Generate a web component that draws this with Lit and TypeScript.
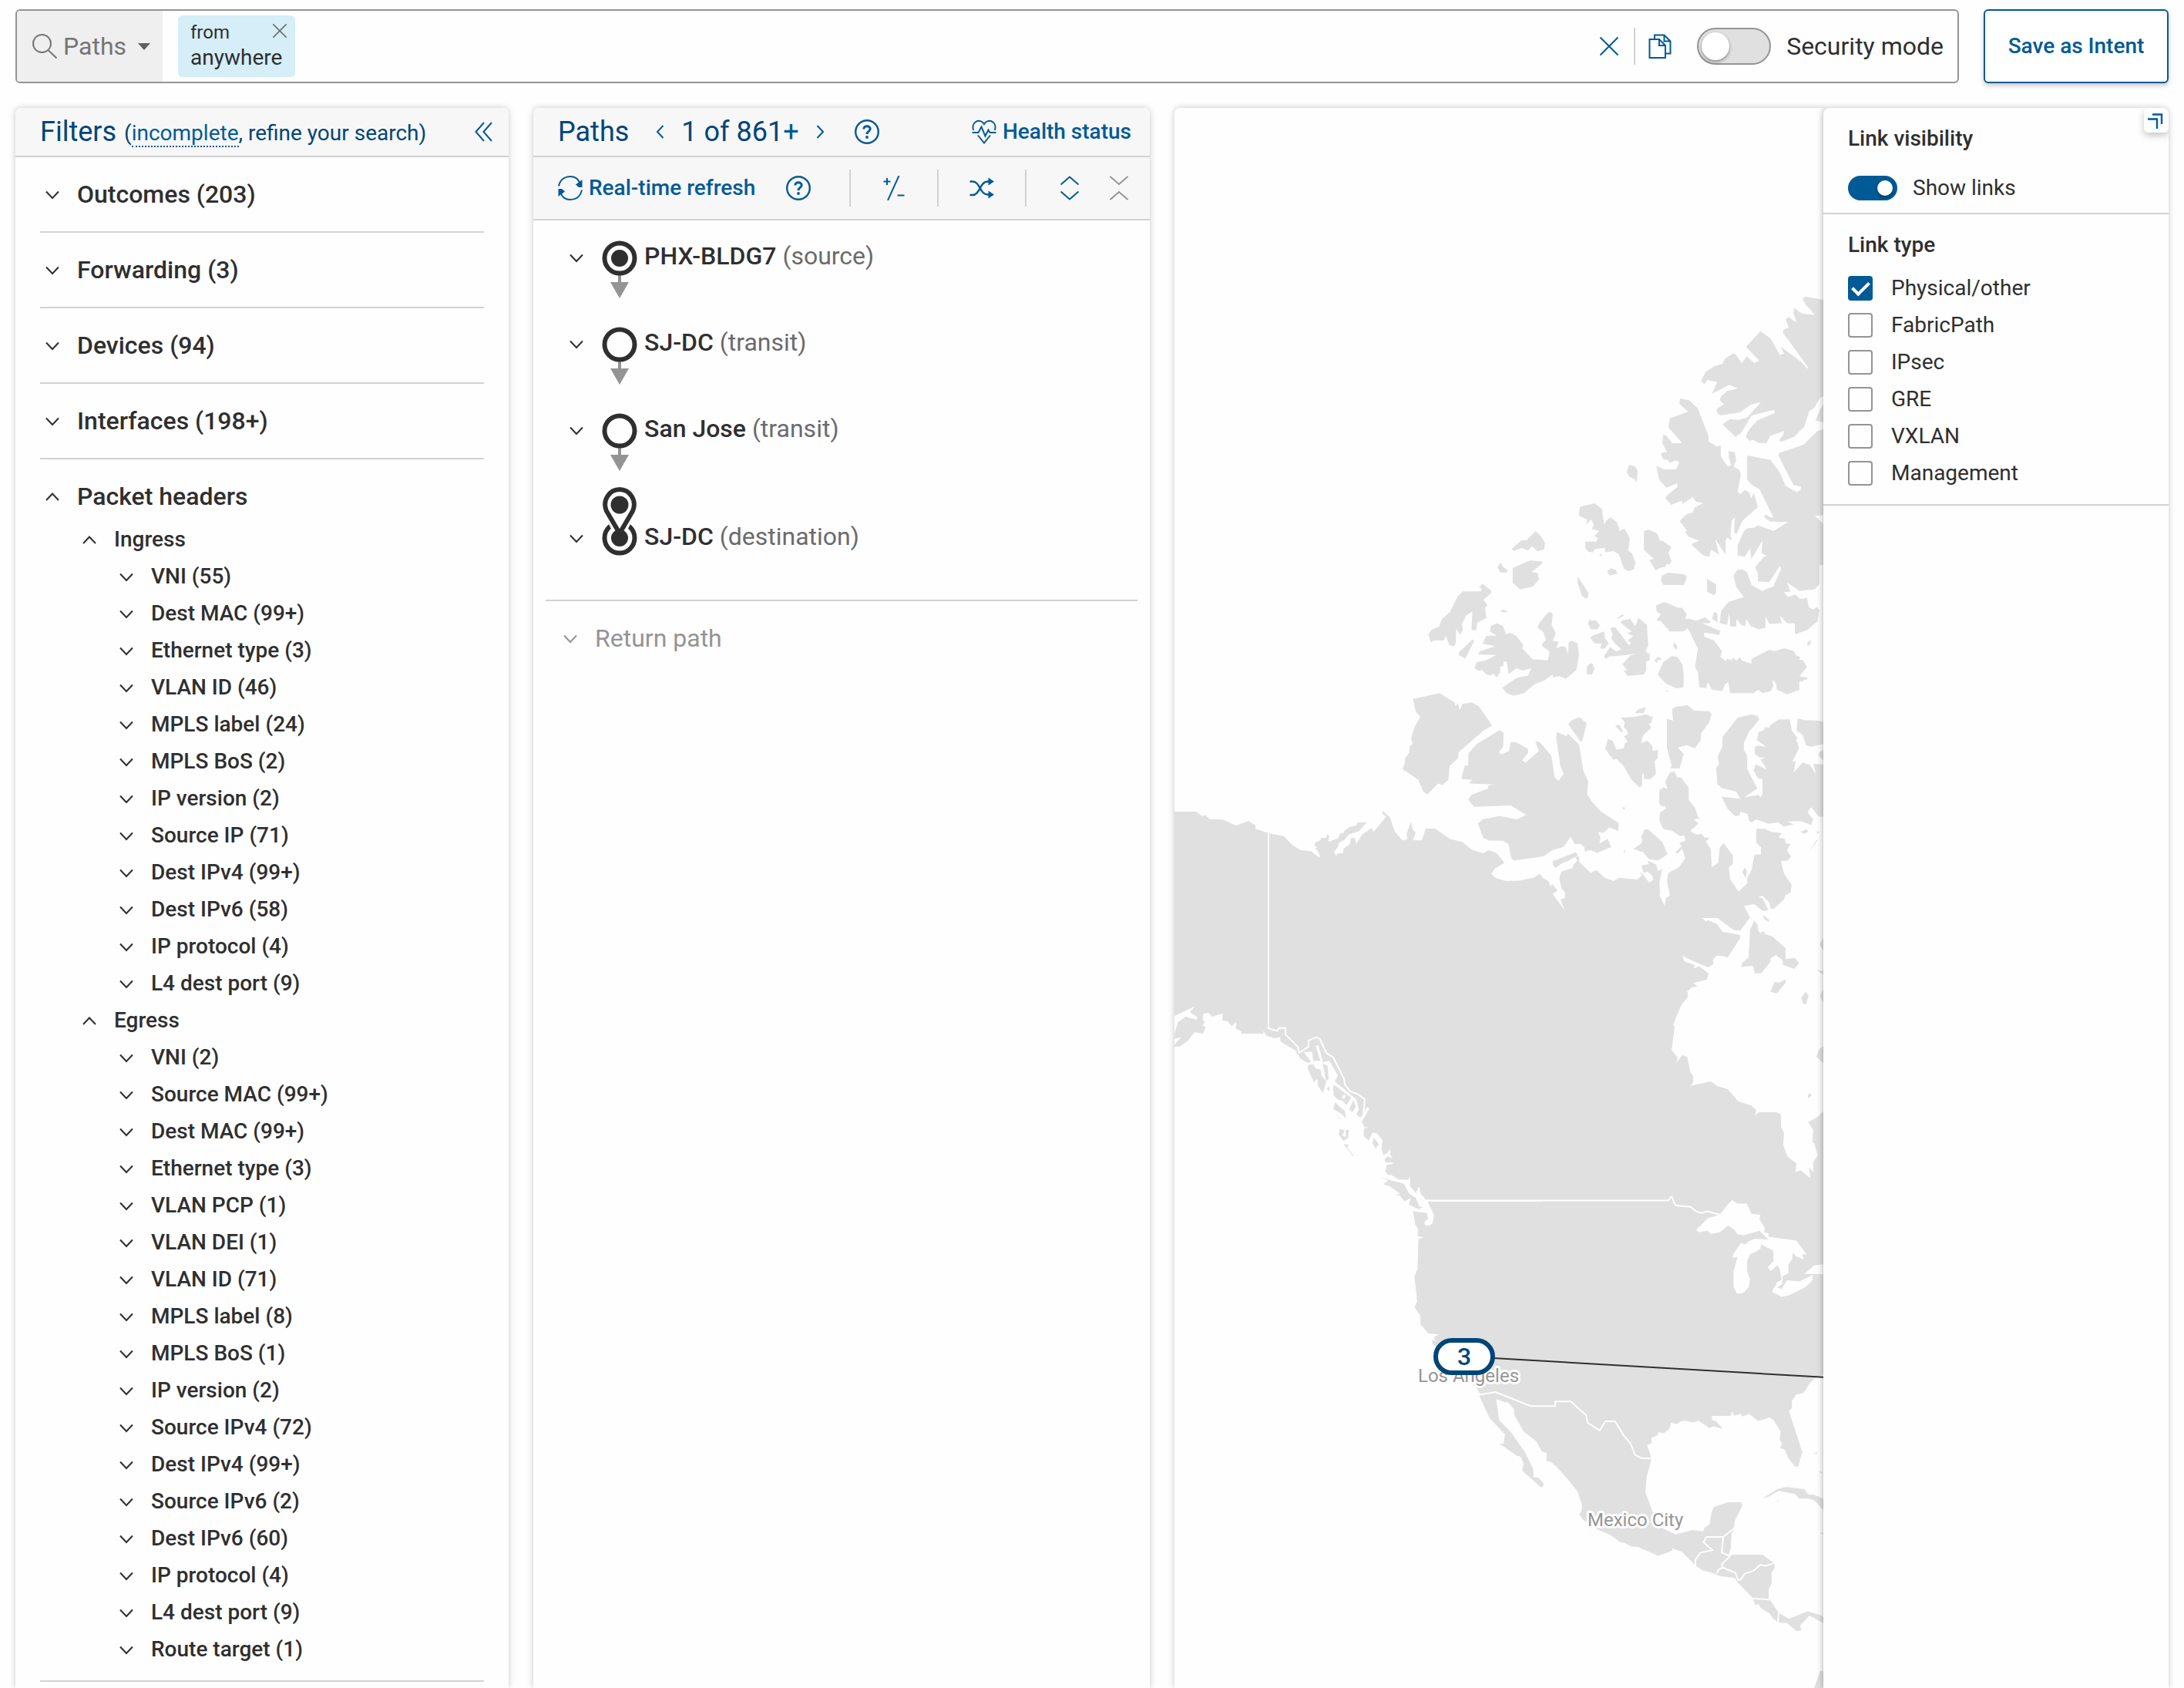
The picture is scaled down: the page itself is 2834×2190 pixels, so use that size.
import { LitElement, html, svg, css, type TemplateResult } from "lit";
import { customElement, property, state } from "lit/decorators.js";

type Glyph = TemplateResult;

const line = (d: string, w = 2): Glyph =>
  svg`<path d=${d} fill="none" stroke="currentColor" stroke-width=${w} />`;

const GLYPHS: Record<string, Glyph> = {
  search: svg`<circle cx="12.5" cy="12.5" r="11.5" fill="none" stroke="currentColor" stroke-width="2" />${line("M21 21.5 31.5 31.5")}`,
  close: line("M4.5 4.5 27.5 27.5M27.5 4.5 4.5 27.5"),
  copy: svg`${line("M9 7V1.5h12.5L29.5 9.5V25.5H23M21.5 1.5V9.5H29.5")}${line("M2.5 7H15L23 15V31H2.5ZM15 7V15H23")}`,
  collapse: line("M16 4 5.500 16 16 28M26 4 15.500 16 26 28"),
  prev: line("M20.500 8 13 16 20.500 24"),
  next: line("M11.500 8 19 16 11.500 24"),
  help: svg`<circle cx="16" cy="16" r="14.800" fill="none" stroke="currentColor" stroke-width="2.400" />${line("M11.800 12.500C11.800 7.500 20.200 7.500 20.200 12.300 20.200 15.500 16 15.400 16 19", 3)}<circle cx="16" cy="23" r="1.900" fill="currentColor" />`,
  health: svg`${line("M2.200 14C-1.500 3 11-2.500 16 6 21-2.500 33.500 3 29.800 14M8 20.500 16 30.500 24 20.500")}${line("M.5 17H8.500L12.500 9.500 17.500 21.500 21.500 13.500 23.500 17H31.500")}`,
  refresh: svg`${line("M1 13.500C3 4 10 1 16 1 22 1 26.500 4.500 28.500 9.500M31 18.500C29 28 22 31 16 31 10 31 5.500 27.500 3.500 22.500")}<path fill="currentColor" d="M31.500 5V15H27L23 11.500ZM.5 27V17H5L9 20.500Z" />`,
  diff: line("M22.500 0 8 32M2.500 7.500H11.500M7 3V12M20.500 25.500H29.500"),
  shuffle: svg`${line("M.5 7.500H4C14 7.500 13 24.500 24 24.500H26M.5 25H4C14 25 13 7.500 24 7.500H26", 2.400)}<path fill="currentColor" d="M24.500 2.500 32 7.500 24.500 12.500ZM24.500 19.500 32 24.500 24.500 29.500Z" />`,
  expand: line("M4.500 11.500 16 1.500 27.500 11.500M4.500 20.500 16 30.500 27.500 20.500"),
  contract: line("M4.500 1 16 11 27.500 1M4.500 31 16 21 27.500 31"),
  corner: line("M11 8.500H23V21M5 14.500H17V27", 2.400),
};

@customElement("ui-icon")
class UiIcon extends LitElement {
  @property() name = "";

  static styles = css`
    :host { display: inline-flex; flex: none; width: 32px; height: 32px; }
    .glyph { display: block; width: 100%; height: 100%; }
  `;

  render() {
    return html`<svg class="glyph" viewBox="0 0 32 32" aria-hidden="true">${GLYPHS[this.name]}</svg>`;
  }
}

@customElement("ui-chevron")
class UiChevron extends LitElement {
  @property({ type: Boolean }) up = false;

  static styles = css`
    :host { display: inline-flex; flex: none; width: 24px; height: 24px; }
    .glyph { display: block; width: 100%; height: 100%; }
  `;

  render() {
    const d = this.up ? "M4 17 12 8.500 20 17" : "M4 8.500 12 17 20 8.500";
    return html`<svg class="glyph" viewBox="0 0 24 24" aria-hidden="true">${line(d)}</svg>`;
  }
}

/* Land outlines. Each sheet has its own grid, placed on the map by its transform. */
interface Sheet {
  transform: string;
  land: string[];
  water?: string[];
  borders?: string[];
}

const SHEETS: Sheet[] = [
  {
    transform: "translate(256 220) scale(.38265)",
    land: [
      "1568,80 1531,76 1470,65 1461,73 1472,93 1503,127 1458,122 1434,104 1430,118 1440,153 1412,134 1404,142 1414,170 1398,175 1394,187 1482,308 1475,308 1455,285 1386,234 1398,258 1384,263 1353,207 1318,182 1269,235 1314,282 1297,290 1272,267 1255,290 1232,258 1222,260 1198,275 1190,293 1160,302 1132,320 1117,350 1128,362 1138,348 1172,354 1154,394 1213,364 1241,376 1206,385 1184,403 1180,416 1194,430 1169,446 1172,460 1182,468 1250,457 1284,432 1320,422 1300,445 1273,475 1243,483 1215,480 1190,498 1233,540 1252,528 1288,468 1365,448 1367,460 1308,484 1278,518 1268,540 1282,555 1292,550 1313,561 1338,561 1352,537 1398,520 1395,535 1380,553 1392,556 1432,540 1467,506 1484,452 1500,443 1520,408 1531,404 1568,400",
      "1568,410 1531,430 1520,448 1505,485 1531,491 1568,494",
      "1568,505 1512,520 1464,567 1385,594 1378,602 1430,703 1455,709 1455,720 1442,728 1404,707 1382,658 1352,619 1276,604 1273,610 1273,685 1288,703 1315,718 1362,813 1355,815 1335,803 1330,812 1350,827 1413,829 1363,859 1308,840 1300,848 1275,850 1262,860 1241,908 1241,943 1265,947 1283,918 1287,955 1325,892 1322,935 1340,944 1330,947 1300,982 1310,1003 1310,1031 1348,1032 1385,977 1388,990 1362,1047 1323,1063 1288,1042 1273,1000 1258,990 1240,991 1227,1010 1236,1050 1262,1083 1210,1100 1185,1130 1180,1172 1205,1178 1212,1138 1216,1183 1236,1184 1237,1158 1253,1178 1267,1182 1270,1158 1285,1182 1313,1193 1335,1188 1336,1148 1348,1175 1390,1172 1384,1145 1408,1172 1435,1173 1435,1210 1478,1195 1512,1165 1518,1128 1510,1118 1495,1126 1482,1118 1477,1087 1452,1090 1437,1075 1412,1083 1398,1067 1420,1065 1408,1033 1450,1063 1503,1057 1518,1040 1518,975 1568,975",
      "1046,410 1076,416 1105,443 1142,538 1142,556 1170,572 1184,570 1184,606 1206,640 1220,637 1211,612 1210,588 1231,593 1236,620 1227,640 1245,652 1252,665 1241,727 1250,735 1265,720 1280,730 1286,750 1296,730 1309,778 1257,825 1238,868 1229,866 1231,813 1221,825 1216,875 1222,893 1207,882 1200,890 1200,940 1165,887 1178,940 1150,922 1145,947 1125,943 1085,907 1090,900 1112,893 1073,878 1062,860 1070,860 1044,826 1067,803 1088,798 1095,780 1125,765 1100,760 1088,745 1053,768 1052,757 1015,771 996,750 1000,740 1037,710 1036,698 999,713 974,684 965,638 992,651 1032,651 1043,628 1035,620 1010,628 1002,617 990,618 981,602 985,594 1001,592 985,560 989,532 1000,537 1019,562 1053,561 1006,508 1011,478 1073,455 1043,428",
      "873,635 892,640 902,655 898,696 890,683 872,675 865,660",
      "708,777 756,766 781,785 788,838 796,824 810,813 833,832 840,860 857,851 875,883 870,927 882,934 895,967 888,990 870,996 855,987 838,938 820,928 792,931 790,916 755,922 750,932 733,929 724,915 724,896 762,896 767,884 754,877 772,860 746,852 754,838 743,820 728,838 730,820 703,808 703,795",
      "555,860 573,876 588,900 584,923 562,928 543,912 530,926 510,917 480,927 475,920 508,891 525,891",
      "537,959 578,963 578,970 542,998 562,1002 567,1023 547,1048 503,1058 478,1034 478,985",
      "438,966 444,980 462,993 456,1001 436,1000 426,983",
      "923,860 940,855 968,868 977,892 987,894 1016,914 1006,934 1017,962 1008,974 1002,970 994,982 978,984 963,993 941,958 957,954 923,924",
      "985,1011 1005,1001 1060,1006 1069,1015 1059,1043 990,1043 980,1027",
      "1137,1022 1168,1040 1168,1068 1160,1078 1137,1065",
      "812,986 828,992 832,1004 806,1011 798,996",
      "775,938 780,936 778,946 773,944",
      "699,1014 734,1068 734,1084 726,1089 713,1080 698,1034",
      "376,1038 405,1062 404,1070 379,1093 392,1111 384,1120 389,1154 358,1170 354,1197 338,1194 341,1132 320,1146 306,1175 309,1194 300,1212 286,1191 285,1240 277,1251 263,1246 251,1214 245,1230 210,1231 201,1238 192,1212 202,1195 228,1184 238,1158 265,1135 291,1082 309,1064 370,1064 373,1056 364,1050",
      "434,1133 445,1126 454,1128 464,1136",
      "342,1227 347,1232 317,1292 295,1280 296,1271",
      "404,1182 424,1172 446,1182 455,1210 470,1205 490,1215 514,1245 510,1257 545,1294 597,1298 603,1268 578,1250 579,1240 591,1228 582,1202 562,1187 569,1170 597,1137 607,1133 614,1143 610,1178 624,1207 614,1232 633,1235 626,1258 645,1250 658,1254 666,1278 668,1238 676,1231 698,1240 703,1279 694,1331 658,1361 635,1352 614,1356 613,1346 586,1366 552,1379 515,1410 482,1418 458,1410 443,1391 492,1357 530,1350 541,1324 513,1333 491,1325 464,1345 458,1304 448,1300 446,1318 436,1320 435,1340 424,1356 412,1343 403,1350 388,1346 375,1331 363,1334 348,1325 356,1304 388,1298 422,1280 360,1278 366,1268 420,1250 376,1242 388,1215 424,1214 400,1200",
      "738,1157 743,1163 760,1162 774,1180 764,1193 743,1193 734,1175",
      "829,1157 850,1142 856,1146 838,1156",
      "740,1222 750,1214 788,1200 791,1224 804,1240 789,1259 774,1258 780,1242 756,1240",
      "844,1171 850,1162 877,1158 893,1183 905,1154 933,1178 938,1248 928,1268 943,1277 942,1298 930,1302 931,1332 922,1346 869,1351 855,1335 866,1330 850,1312 877,1282 895,1276 835,1283 805,1285 795,1293 787,1285 808,1253 830,1268 846,1260 822,1238 812,1224 818,1210 808,1190 825,1185 872,1246 880,1240 868,1230 887,1216 866,1206 882,1200 863,1186",
      "741,1308 749,1310 755,1328 747,1346 729,1345 730,1318",
      "1026,1237 1036,1250 1034,1262 1022,1250",
      "958,1300 970,1286 982,1291 982,1297 972,1296 968,1307",
      "1018,1283 1036,1287 1054,1312 1058,1350 1057,1389 1033,1393 998,1377 970,1347 988,1304",
      "996,1400 1003,1400 1004,1406",
      "964,1112 993,1100 1038,1120 1052,1120 1068,1140 1063,1158 1079,1158 1100,1164 1131,1152 1150,1168 1145,1172 1120,1172 1182,1199 1178,1212 1127,1204 1128,1218 1160,1230 1188,1267 1182,1286 1202,1300 1206,1292 1220,1298 1225,1287 1236,1300 1248,1287 1257,1300 1287,1309 1288,1293 1348,1262 1365,1267 1400,1257 1432,1267 1438,1280 1453,1287 1449,1295 1463,1298 1476,1321 1460,1340 1450,1352 1477,1357 1476,1364 1466,1363 1462,1371 1450,1368 1450,1398 1408,1413 1373,1397 1372,1378 1358,1363 1362,1388 1353,1403 1326,1409 1310,1398 1295,1409 1215,1409 1209,1372 1198,1380 1188,1403 1153,1397 1140,1372 1134,1393 1111,1389 1106,1337 1096,1321 1106,1258 1072,1190 1056,1200 1010,1200 982,1167 966,1162 980,1142 966,1132",
      "1161,1133 1172,1140 1173,1170 1154,1158",
      "1490,1228 1487,1242 1478,1252 1477,1238",
    ],
    water: ["1503,808 1531,806 1531,835"],
  },
  {
    transform: "translate(256 740) scale(.38265)",
    land: [
      "140,70 230,50 282,83 284,95 292,85 298,107 308,87 338,81 363,95 408,160 375,180 295,250 292,272 264,297 260,344 240,362 225,357 188,394 174,383 158,344 104,308 112,288 113,272 128,250 128,232 139,222 133,205 145,165 165,130 149,113",
      "434,176 447,185 446,230 432,250 438,259 465,247 472,217 490,217 530,240 530,253 510,278 522,286 567,246 555,215 568,215 609,262 620,335 633,348 651,325 640,298 625,200 628,182 660,196 665,187 703,225 718,315 734,350 730,392 745,416 775,450 838,491 836,518 806,506 786,524 768,522 776,540 772,560 800,544 812,572 765,592 740,582 722,588 722,574 708,562 688,562 675,537 650,572 612,583 583,604 482,618 473,610 464,563 445,551 398,550 378,541 360,492 377,478 433,467 492,478 524,464 472,431 347,436 327,411 338,395 394,374 396,364 414,360 330,357 340,344 306,342 305,332 316,296 327,295 328,254 357,222",
      "676,143 705,132 729,153 714,213 708,215 667,157",
      "893,118 903,106 930,98 922,118",
      "845,133 888,131 930,122 953,132 948,150 940,155 947,168 920,194 913,220 935,211 953,232 951,247 970,242 970,270 959,282 964,323 946,342 923,342 922,322 917,325 917,362 909,371 880,343 853,296 830,274 819,276 792,240 801,206 817,212 830,242 854,238 858,220 868,214 855,198 870,188 864,176 855,165 858,148",
      "826,162 838,156 853,180 846,182",
      "851,438 858,438 857,445 852,444",
      "855,580 860,588 855,594",
      "1018,105 1030,97 1070,91 1094,110 1145,112 1152,122 1145,148 1116,188 1116,210 1096,237 1067,227 1038,235 1058,257 1044,306 1013,306 1017,295 1001,235 1001,137 1022,144",
      "1241,133 1288,123 1308,127 1314,140 1279,182 1262,219 1262,244 1273,262 1273,308 1308,374 1263,404 1312,395 1318,404 1325,395 1325,342 1310,340 1295,313 1302,292 1340,309 1318,275 1337,270 1315,268 1299,256 1299,233 1308,228 1337,232 1306,210 1312,182 1330,176 1334,165 1348,168 1352,158 1380,140 1417,139 1425,178 1443,202 1440,210 1449,237 1425,284 1438,280 1430,320 1462,285 1472,290 1485,292 1507,326 1497,290 1530,292 1568,292 1568,470 1531,470 1517,470 1490,437 1478,455 1497,478 1490,497 1455,485 1410,485 1430,495 1398,503 1378,489 1345,493 1303,478 1290,489 1280,484 1274,460 1250,452 1248,466 1232,467 1207,443 1186,401 1250,409 1236,384 1191,374 1172,360 1168,304 1178,291 1173,266 1189,232 1190,198",
      "1445,135 1465,142 1518,144 1568,160 1568,215 1517,226 1492,232 1473,228 1462,193 1440,177",
      "1568,240 1531,243 1518,250 1515,262 1531,280 1568,280",
      "7,520 50,468 35,455 38,450 62,472 78,520 104,550 122,546 118,528 133,488 139,512 148,523 140,550 170,550 184,510 215,510 265,545 308,556 340,582 377,593 398,583 423,592 450,626 417,645 406,663 417,676 455,687 500,687 552,676 570,663 580,676 598,687 607,707 612,697 630,720 614,732 655,787 640,750 655,745 655,725 643,712 636,678 643,656 682,643 685,632 697,618 690,606 703,603 703,622 742,660 762,651 790,676 820,687 840,676 900,682 917,668 908,655 918,662 940,692 954,685 952,670 935,655 922,660 914,635 940,630 935,618 965,632 970,655 985,645 975,695 978,728 975,735 993,770 998,745 1011,737 1001,685 1006,660 1042,640 1063,610 1053,578 1035,596 1030,590 1050,570 1043,558 1063,550 1060,533 1045,535 1020,518 988,510 975,480 978,455 997,442 995,432 985,435 975,425 975,380 988,370 1003,375 995,350 1010,320 1027,316 1035,335 1050,337 1075,372 1075,413 1097,440 1106,470 1115,475 1092,478 1108,492 1080,518 1100,530 1118,528 1130,540 1147,540 1133,552 1150,580 1153,640 1175,625 1180,575 1193,559 1225,600 1225,630 1211,640 1215,680 1244,723 1273,695 1273,678 1288,650 1298,598 1320,597 1320,573 1304,558 1304,510 1335,510 1352,520 1390,525 1380,540 1400,545 1405,560 1420,562 1408,582 1422,605 1410,618 1388,620 1398,662 1424,700 1420,727 1403,735 1398,750 1365,780 1353,782 1348,760 1325,737 1310,743 1325,745 1345,785 1328,790 1297,766 1262,772 1283,810 1250,855 1228,854 1172,813 1120,813 1135,825 1140,820 1170,833 1190,860 1248,870 1250,880 1207,947 1190,942 1170,940 1158,952 1158,970 1140,980 1063,947 1053,938 1060,960 1095,972 1092,983 1110,976 1142,1000 1137,1022 1090,1033 1105,1045 1085,1048 1070,1062 1073,1078 1060,1095 1048,1112 1022,1175 1027,1182 1017,1260 1037,1285 1033,1303 1053,1278 1070,1283 1080,1335 1090,1350 1090,1370 1080,1382 1150,1367 1170,1382 1207,1393 1243,1435 1290,1450 1304,1465 1300,1482 1313,1471 1373,1471 1388,1480 1388,1520 1398,1542 1396,1575 60,1575 0,1500 0,520",
      "614,620 645,608 692,590 700,600 668,618 640,630 625,643 614,634",
      "887,578 915,560 918,545 913,540 925,512 937,512 985,555 1003,597 970,618 940,612 920,590",
      "1297,821 1309,836 1310,855 1318,865 1328,857 1335,868 1358,875 1403,915 1403,952 1435,948 1449,966 1433,985 1395,972 1393,955 1370,938 1352,950 1352,962 1321,1000 1299,1000 1293,975 1253,979 1256,965 1278,947 1283,853",
      "1366,1029 1380,1032 1403,1022 1403,1033 1374,1068 1352,1063",
      "1473,1061 1481,1078 1473,1105 1464,1104 1456,1083",
      "1530,882 1518,902 1530,922 1568,922 1568,882",
      "1510,990 1531,992 1531,1005",
      "1531,1055 1519,1077 1531,1100 1568,1100 1568,1055",
      "1531,1248 1517,1257 1508,1284 1531,1305 1568,1305 1568,1248",
      "1485,1405 1492,1413 1482,1425 1478,1417",
      "1568,1450 1531,1468 1510,1488 1480,1505 1497,1530 1495,1575 1568,1575",
      "1265,640 1273,655 1267,677 1257,658",
      "1328,802 1348,820 1345,826 1330,815",
      "1455,520 1475,512 1480,520 1465,527",
      "1510,520 1518,520 1510,530",
      "1508,548 1512,550 1485,586",
    ],
    water: ["1248,482 1262,484 1266,492", "990,532 1000,530 999,545 992,545"],
  },
  {
    transform: "translate(-24 890) scale(.33333 .38265)",
    land: [
      "60,60 155,60 180,76 192,71 210,86 260,87 311,107 360,92 386,105 388,118 438,133 498,144 532,174 562,190 605,195 636,216 638,212 632,196 620,186 628,180 616,175 620,165 640,157 642,149 662,149 668,137 675,144 670,163 710,150 716,135 730,132 735,125 755,112 782,106 784,97 820,97 790,127 750,138 735,155 712,166 710,178 693,196 702,212 706,202 728,201 730,186 755,170 758,150 773,149 780,170 802,138 838,117 848,129 897,78 880,66 884,58 908,78 928,128 960,159 980,154 976,140 992,97 998,120 1011,132 999,157 1035,159 1050,118 1086,118 1145,153 1193,164 1230,190 1272,201 1297,191 1325,202 1356,233 1318,254 1305,272 1320,285 1358,295 1414,294 1472,284 1493,271 1500,278 1500,1575 1020,1575 1023,1508 1046,1506 1020,1498 1022,1470 1010,1462 1001,1416 1052,1424 1060,1440 1043,1452 1046,1462 1062,1466 1078,1455 1083,1426 1076,1410 1062,1382 1058,1365 1040,1352 1022,1328 1018,1345 1005,1340 993,1332 990,1296 982,1308 945,1308 932,1290 905,1292 892,1280 900,1262 925,1256 922,1250 893,1250 890,1238 905,1228 925,1240 910,1222 918,1210 908,1203 905,1215 885,1225 878,1200 882,1175 862,1152 843,1148 828,1175 808,1160 810,1135 830,1130 812,1130 801,1112 830,1068 822,1060 808,1085 795,1098 780,1085 790,1070 780,1035 758,1020 696,975 708,955 692,930 675,905 650,910 632,850 622,855 640,905 612,905 608,875 575,875 604,908 590,912 562,897 540,868 485,840 484,825 460,828 430,820 418,803 418,813 332,813 332,805 310,795 314,772 295,788 280,772 258,767 260,745 218,755 205,742 185,745 182,765 190,775 180,785 194,790 183,813 150,808 125,836 95,855 72,858 72,850 98,826 72,830 72,812 85,775 115,755 158,766 162,757 132,740 152,720 60,758",
      "594,918 615,918 620,930 640,935 645,955 662,975 655,1000 650,1014 632,992 628,965 615,978 590,930",
      "650,915 668,922 672,965 662,975",
      "664,1000 674,992 676,1008",
      "692,985 760,1030 742,1055 725,1040 705,1035 692,1022 690,1000",
      "768,1038 778,1060 766,1078 752,1070",
      "698,1045 720,1065 735,1075 740,1100 722,1085 690,1068",
      "698,1080 718,1103 714,1103",
      "715,1137 735,1140 725,1160 740,1163 738,1140 752,1138 748,1165 730,1178 712,1155",
      "730,1187 750,1190 745,1200 770,1228 766,1228",
      "848,1165 868,1188 855,1202 843,1185",
      "873,1300 905,1308 965,1322 985,1355 1012,1370 1025,1398 1040,1403 1020,1408 985,1392 992,1370 968,1382 950,1362 935,1360 950,1355 910,1330 888,1325 890,1318 905,1312",
    ],
    water: ["728,1020 740,1022 733,1035 724,1030", "225,795 230,798 208,822"],
    borders: [
      "438,130 438,795 473,804 478,794 504,794 504,815 552,858 558,878 594,857 594,836 624,825 637,830 665,880 690,893 732,965 735,985 755,1008 785,1018 812,1035 808,1090",
      "1050,1380 1500,1380",
    ],
  },
  {
    transform: "translate(256 1340) scale(.38265 .45281)",
    land: [
      "60,-4 1394,-4 1396,15 1410,45 1440,65 1437,90 1455,85 1487,107 1483,75 1497,90 1497,60 1512,42 1497,-4 1568,-4 1568,660 1531,670 1500,682 1480,700 1475,710 1462,723 1440,727 1425,745 1425,765 1415,775 1447,858 1460,892 1446,933 1435,933 1412,908 1400,885 1385,880 1392,868 1383,855 1387,833 1362,800 1348,793 1310,803 1280,783 1255,790 1253,782 1230,788 1222,775 1218,788 1153,789 1155,800 1170,805 1190,826 1158,818 1145,823 1108,802 1088,808 1070,803 1050,803 1035,812 1015,808 1010,825 990,838 972,835 970,843 948,852 950,867 934,872 948,908 946,920 933,960 928,1007 952,1062 985,1110 1030,1128 1087,1115 1124,1119 1128,1110 1146,1098 1152,1065 1160,1049 1208,1036 1253,1036 1257,1045 1231,1090 1228,1115 1220,1125 1218,1165 1210,1188 1232,1186 1325,1186 1342,1197 1366,1210 1366,1225 1356,1238 1356,1270 1346,1285 1346,1310 1380,1352 1415,1370 1478,1348 1518,1358 1568,1380 1568,1400 1485,1360 1452,1390 1458,1402 1440,1405 1408,1382 1378,1380 1360,1368 1350,1355 1320,1340 1312,1328 1300,1330 1292,1310 1240,1265 1230,1252 1180,1247 1160,1240 1120,1230 1098,1217 1052,1178 1020,1168 1018,1175 972,1189 902,1164 880,1163 858,1152 843,1150 808,1129 760,1112 715,1085 704,1070 712,1060 713,1043 698,1005 665,970 628,935 607,920 593,918 593,895 577,890 557,860 515,833 483,785 482,768 460,748 452,750 422,740 432,800 475,838 520,893 547,940 550,965 565,965 585,985 575,994 510,945 515,925 505,905 492,902 433,868 447,868 452,842 400,795 365,732 368,725 355,708 330,690 230,600 207,583 203,570 217,575 210,563 227,555 192,552 165,525 165,502 145,477 154,460 145,388 155,368 159,281 180,277 155,272 158,255 150,242 141,202 187,207 190,222 178,230 180,245 205,240 212,215 190,175 165,150 160,130 150,150 130,130 130,100 90,110 50,90 50,70 75,65 50,50 75,50 60,25",
      "1325,1025 1375,998 1405,992 1468,998 1480,1013 1500,1014 1568,1040 1568,1070 1531,1058 1500,1030 1480,1025 1450,1025 1435,1012 1380,1003 1350,1018",
      "1500,1568 1510,1545 1520,1520 1568,1515 1568,1575 1500,1575",
      "1518,945 1528,950 1524,955",
      "1498,895 1512,894 1508,898",
      "1518,1123 1535,1123 1535,1130",
      "1375,1030 1380,1031 1377,1035",
    ],
    water: [
      "1100,255 1140,222 1180,212 1205,185 1222,170 1240,180 1272,180 1288,210 1318,212 1315,225 1333,250 1330,262 1345,265 1345,275 1440,286 1475,326 1460,325 1465,340 1437,330 1428,320 1425,340 1413,355 1413,380 1393,388 1392,410 1375,420 1390,425 1408,400 1450,403 1495,385 1495,400 1470,420 1415,443 1390,447 1357,433 1375,405 1390,398 1383,365 1375,357 1353,373 1343,362 1362,345 1362,315 1320,297 1318,310 1298,320 1282,325 1273,345 1273,375 1283,397 1278,420 1260,436 1238,438 1227,418 1227,375 1240,333 1222,335 1228,322 1253,292 1265,298 1280,287 1300,281 1345,283 1330,270 1315,258 1260,271 1240,268 1230,255 1208,243 1180,262 1150,267 1138,258 1110,262",
      "1467,382 1500,357 1568,350 1568,382",
    ],
    borders: [
      "185,171 1005,171 1017,160 1030,185 1083,190 1100,203 1120,207 1137,202 1180,212",
      "360,728 420,720 538,760 622,760 622,747 675,747 727,787 732,808 773,830 793,804 825,804 855,845 878,868 893,900 915,910 950,910",
      "1097,1222 1098,1200 1115,1180 1155,1173 1125,1150 1135,1135 1192,1135 1187,1180 1215,1190 1188,1213 1188,1222 1233,1238 1242,1258 1250,1258 1265,1240 1295,1232 1318,1215 1335,1218 1366,1210",
      "1192,1135 1232,1108",
      "1170,1240 1176,1228 1190,1224",
      "1290,1311 1350,1315",
      "1377,1384 1380,1350",
    ],
  },
];

@customElement("world-map")
class WorldMap extends LitElement {
  static styles = css`
    :host { display: block; position: relative; overflow: hidden; background: #fefefe; }
    .canvas { position: absolute; left: 0; top: 0; width: 1290px; height: 2050px; }
    .land { fill: #e0e0e0; }
    .water { fill: #fefefe; }
    .border { fill: none; stroke: #fefefe; stroke-width: 2px; vector-effect: non-scaling-stroke; }
    .route { stroke: #2f2f2f; stroke-width: 2px; }
    .city { font-size: 24px; fill: #969696; stroke: #fefefe; stroke-width: 6px; stroke-linejoin: round; paint-order: stroke; }
    .cluster {
      position: absolute; left: 336px; top: 1596px; box-sizing: border-box; width: 80px; height: 48px;
      padding: 0; border: 6px solid #004578; border-radius: 24px; background: #fff; color: #004578;
      font: 500 32px/36px Roboto, "Liberation Sans", sans-serif; cursor: pointer;
    }
  `;

  render() {
    return html`
      <svg class="canvas" viewBox="0 0 1290 2050" role="img" aria-label="Map of North America">
        ${SHEETS.map(
          (s) => svg`<g transform=${s.transform}>
            ${s.land.map((p) => svg`<polygon class="land" points=${p} />`)}
            ${(s.water ?? []).map((p) => svg`<polygon class="water" points=${p} />`)}
          </g>`,
        )}
        ${SHEETS.map(
          (s) => svg`<g transform=${s.transform}>
            ${(s.borders ?? []).map((p) => svg`<polyline class="border" points=${p} />`)}
          </g>`,
        )}
        <line class="route" x1="414" y1="1622" x2="846" y2="1647"></line>
        <text class="city" x="316" y="1653">Los Angeles</text>
        <text class="city" x="536" y="1840">Mexico City</text>
      </svg>
      <button class="cluster" type="button">3</button>
    `;
  }
}

type HopKind = "source" | "transit" | "destination";

interface Hop {
  name: string;
  kind: HopKind;
}

interface Group {
  title: string;
  items: string[];
}

const FILTERS = ["Outcomes (203)", "Forwarding (3)", "Devices (94)", "Interfaces (198+)"];

const HEADER_GROUPS: Group[] = [
  {
    title: "Ingress",
    items: [
      "VNI (55)", "Dest MAC (99+)", "Ethernet type (3)", "VLAN ID (46)", "MPLS label (24)", "MPLS BoS (2)",
      "IP version (2)", "Source IP (71)", "Dest IPv4 (99+)", "Dest IPv6 (58)", "IP protocol (4)", "L4 dest port (9)",
    ],
  },
  {
    title: "Egress",
    items: [
      "VNI (2)", "Source MAC (99+)", "Dest MAC (99+)", "Ethernet type (3)", "VLAN PCP (1)", "VLAN DEI (1)",
      "VLAN ID (71)", "MPLS label (8)", "MPLS BoS (1)", "IP version (2)", "Source IPv4 (72)", "Dest IPv4 (99+)",
      "Source IPv6 (2)", "Dest IPv6 (60)", "IP protocol (4)", "L4 dest port (9)", "Route target (1)",
    ],
  },
];

const HOPS: Hop[] = [
  { name: "PHX-BLDG7", kind: "source" },
  { name: "SJ-DC", kind: "transit" },
  { name: "San Jose", kind: "transit" },
  { name: "SJ-DC", kind: "destination" },
];

const LINK_TYPES = ["Physical/other", "FabricPath", "IPsec", "GRE", "VXLAN", "Management"];

@customElement("app-root")
class AppRoot extends LitElement {
  @state() private linkTypes = new Set<string>(["Physical/other"]);

  static styles = css`
    :host {
      display: flex; flex-direction: column; box-sizing: border-box; height: 100vh; overflow: hidden;
      padding: 12px 20px 0; gap: 32px; background: #fefefe; color: #2f2f2f;
      font: 400 28px/40px Roboto, "Liberation Sans", sans-serif;
    }
    * { box-sizing: border-box; }
    button, input, select { font: inherit; color: inherit; }
    button { display: inline-flex; align-items: center; padding: 0; border: 0; background: none; cursor: pointer; text-align: left; white-space: nowrap; }
    h2, h3, p, ul, ol { margin: 0; padding: 0; font: inherit; list-style: none; }

    .top { display: flex; gap: 32px; height: 96px; flex: none; }
    .search { flex: 1; display: flex; align-items: center; min-width: 0; border: 2px solid #949494; border-radius: 6px; padding-right: 18px; }
    .scope { display: flex; align-items: center; align-self: stretch; width: 189px; padding: 0 16px 0 20px; gap: 8px; border-radius: 4px 0 0 4px; background: #efefef; color: #757575; font-size: 32px; }
    .scope-select { flex: 1; min-width: 0; padding: 0; border: 0; background: none; appearance: none; }
    .caret { flex: none; width: 16px; height: 9px; fill: #5f5f5f; }
    .chip { position: relative; margin-left: 20px; width: 152px; height: 80px; padding: 7px 16px; border-radius: 6px; background: #d5eef8; line-height: 36px; }
    .chip-key { font-size: 24px; line-height: 30px; }
    .chip-close { position: absolute; right: 8px; top: 8px; color: #6b6b6b; }
    .chip-close ui-icon { width: 24px; height: 24px; }
    .query { flex: 1; min-width: 0; align-self: stretch; border: 0; outline: 0; padding: 0 16px; background: none; }
    .blue { color: #005a96; }
    .rule { flex: none; width: 2px; height: 48px; background: #d2d2d2; }
    .search-tools { display: flex; align-items: center; gap: 16px; }
    .save { justify-content: center; width: 240px; border: 2px solid #005a96; border-radius: 6px; color: #005a96; font-weight: 500; background: #fff; box-shadow: 0 3px 6px rgba(0, 0, 0, .22); }

    .switch { display: flex; align-items: center; gap: 20px; cursor: pointer; }
    .switch-input { position: relative; flex: none; appearance: none; margin: 0; width: 64px; height: 32px; border-radius: 16px; background: #005a96; cursor: pointer; }
    .switch-input::before { content: ""; position: absolute; right: 6px; top: 6px; width: 20px; height: 20px; border-radius: 50%; background: #fff; box-shadow: 0 2px 4px rgba(0, 0, 0, .4); }
    .security { font-size: 32px; margin-left: 16px; }
    .security .switch-input { width: 96px; height: 48px; border-radius: 24px; border: 2px solid #949494; background: #e0e0e0; }
    .security .switch-input::before { left: 4px; top: 4px; width: 36px; height: 36px; }

    .columns { flex: 1; min-height: 0; display: grid; grid-template-columns: 64fr 80fr 129fr; gap: 32px; }
    .panel { min-width: 0; border-radius: 8px 8px 0 0; box-shadow: 0 0 8px rgba(0, 0, 0, .22); background: #fefefe; overflow: hidden; }
    .bar { display: flex; align-items: center; height: 64px; padding: 0 24px 0 32px; background: #f7f7f7; border-bottom: 2px solid #d2d2d2; color: #004578; }
    .title { font-size: 36px; }
    .note { padding: 3px 0 0 10px; white-space: nowrap; }
    .dotted { color: #005a96; text-decoration: none; border-bottom: 2px dotted #005a96; }
    .end { margin-left: auto; }
    .filters .bar { padding-right: 16px; }

    .filter-body { padding: 0 32px; }
    .filter { border-bottom: 2px solid #d2d2d2; }
    .row { width: 100%; gap: 20px; font-weight: 500; height: 48px; }
    .row-head { height: 96px; padding-left: 4px; font-size: 32px; }
    .row-open { height: 80px; padding-top: 16px; }
    .row-group { padding-left: 52px; }
    .row-item { padding-left: 100px; }
    .filter-groups { padding-bottom: 16px; }
    .row ui-chevron { color: #2f2f2f; }

    .pager { display: flex; align-items: center; margin-left: 24px; gap: 12px; font-size: 36px; }
    .pager-count { margin: 0; }
    .help { margin-left: 28px; }
    .action { gap: 8px; color: #005a96; font-weight: 500; }
    .toolbar { height: 82px; }
    .toolbar .help { margin-left: 40px; }
    .tools { display: flex; align-items: center; gap: 40px; }
    .tool-pair { display: flex; gap: 32px; }
    .muted { color: #949494; }

    .hops { padding: 26px 16px 54px 44px; }
    .hop { display: flex; align-items: flex-start; margin-bottom: 36px; }
    .hop:nth-last-child(2) { margin-bottom: 20px; }
    .hop:last-child { margin-bottom: 0; }
    .hop-toggle { padding-top: 10px; margin-right: 20px; }
    .hop-marker { flex: none; width: 48px; height: 76px; margin-right: 8px; }
    .hop-name { font-size: 32px; font-weight: 500; }
    .hop-kind { color: #6b6b6b; font-weight: 400; }
    .hop-destination .hop-marker { height: 92px; }
    .hop-destination .hop-toggle { padding-top: 54px; }
    .hop-destination .hop-name { padding-top: 44px; }
    .return { display: flex; margin: 0 16px; border-top: 2px solid #d2d2d2; }
    .return-toggle { height: 96px; padding-left: 20px; gap: 20px; font-size: 32px; color: #949494; }

    .map-panel { display: grid; grid-template-columns: minmax(0, 1fr) 448px; position: relative; }
    .side { position: relative; border-radius: 8px 8px 0 0; background: #fefefe; box-shadow: 0 0 8px rgba(0, 0, 0, .34); }
    .side-section { padding: 20px 32px 16px; border-bottom: 2px solid #d2d2d2; }
    .side-title { font-weight: 500; }
    .show-links { margin-top: 28px; height: 32px; }
    .types { margin-top: 12px; }
    .type { display: flex; align-items: center; gap: 24px; height: 48px; cursor: pointer; }
    .box { position: relative; flex: none; appearance: none; margin: 0; width: 32px; height: 32px; border: 2px solid #949494; border-radius: 4px; cursor: pointer; }
    .box:checked { background: #005a96; border-color: #005a96; }
    .box:checked::before { content: ""; position: absolute; left: 8px; top: 1px; width: 9px; height: 18px; border: solid #fff; border-width: 0 4px 4px 0; transform: rotate(45deg); }
    .corner { position: absolute; right: 0; top: 0; width: 32px; height: 32px; border-radius: 6px; background: #fff; color: #005a96; box-shadow: 0 4px 10px rgba(0, 0, 0, .22); }
  `;

  private toggleType(name: string) {
    const next = new Set(this.linkTypes);
    if (!next.delete(name)) next.add(name);
    this.linkTypes = next;
  }

  private marker(kind: HopKind) {
    if (kind === "destination") {
      return html`<svg class="hop-marker" viewBox="0 0 48 92" aria-hidden="true">
        <circle cx="24" cy="66" r="19.500" fill="#fefefe" stroke="#2f2f2f" stroke-width="6"></circle>
        <path d="M24 64 8 31C4 20 12 3 24 3 36 3 44 20 40 31Z" fill="#fefefe" stroke="#fefefe" stroke-width="11"></path>
        <circle cx="24" cy="66" r="11" fill="#2f2f2f"></circle>
        <path d="M24 60 7 31C1 17 11 3 24 3 37 3 47 17 41 31Z" fill="#fefefe" stroke="#2f2f2f" stroke-width="6"></path>
        <circle cx="24" cy="23" r="11.500" fill="#2f2f2f"></circle>
      </svg>`;
    }
    return html`<svg class="hop-marker" viewBox="0 0 48 76" aria-hidden="true">
      <path d="M22 44H26V54H36L24 75 12 54H22Z" fill="#949494"></path>
      <circle cx="24" cy="23" r="19.500" fill="#fefefe" stroke="#2f2f2f" stroke-width="6"></circle>
      ${kind === "source" ? svg`<circle cx="24" cy="23" r="11" fill="#2f2f2f" />` : null}
    </svg>`;
  }

  private renderSearch() {
    return html`<header class="top">
      <div class="search">
        <label class="scope">
          <ui-icon name="search"></ui-icon>
          <select class="scope-select" aria-label="Search scope"><option>Paths</option></select>
          <svg class="caret" viewBox="0 0 16 9" aria-hidden="true"><path d="M0 0H16L8 9Z"></path></svg>
        </label>
        <div class="chip">
          <div class="chip-key">from</div>
          <div>anywhere</div>
          <button class="chip-close" type="button" aria-label="Remove"><ui-icon name="close"></ui-icon></button>
        </div>
        <input class="query" type="text" aria-label="Search" />
        <div class="search-tools">
          <button class="blue" type="button" aria-label="Clear"><ui-icon name="close"></ui-icon></button>
          <span class="rule"></span>
          <button class="blue" type="button" aria-label="Copy"><ui-icon name="copy"></ui-icon></button>
          <label class="switch security"><input class="switch-input" type="checkbox" role="switch" />Security mode</label>
        </div>
      </div>
      <button class="save" type="button">Save as Intent</button>
    </header>`;
  }

  private renderFilters() {
    return html`<section class="panel filters">
      <div class="bar">
        <h2 class="title">Filters</h2>
        <p class="note">(<a class="dotted" href="#incomplete">incomplete</a>, refine your search)</p>
        <button class="end blue" type="button" aria-label="Collapse filters"><ui-icon name="collapse"></ui-icon></button>
      </div>
      <div class="filter-body">
        ${FILTERS.map(
          (f) => html`<div class="filter"><button class="row row-head" type="button"><ui-chevron></ui-chevron>${f}</button></div>`,
        )}
        <div class="filter filter-groups">
          <button class="row row-head row-open" type="button"><ui-chevron up></ui-chevron>Packet headers</button>
          ${HEADER_GROUPS.map(
            (g) => html`<button class="row row-group" type="button"><ui-chevron up></ui-chevron>${g.title}</button>
              <ul>
                ${g.items.map(
                  (i) => html`<li><button class="row row-item" type="button"><ui-chevron></ui-chevron>${i}</button></li>`,
                )}
              </ul>`,
          )}
        </div>
      </div>
    </section>`;
  }

  private renderPaths() {
    return html`<section class="panel">
      <div class="bar">
        <h2 class="title">Paths</h2>
        <div class="pager">
          <button class="blue" type="button" aria-label="Previous path"><ui-icon name="prev"></ui-icon></button>
          <p class="pager-count">1 of 861<span class="blue">+</span></p>
          <button class="blue" type="button" aria-label="Next path"><ui-icon name="next"></ui-icon></button>
        </div>
        <button class="help blue" type="button" aria-label="Help"><ui-icon name="help"></ui-icon></button>
        <button class="action end" type="button"><ui-icon name="health"></ui-icon>Health status</button>
      </div>
      <div class="bar toolbar">
        <button class="action" type="button"><ui-icon name="refresh"></ui-icon>Real-time refresh</button>
        <button class="help blue" type="button" aria-label="Refresh help"><ui-icon name="help"></ui-icon></button>
        <div class="tools end">
          <span class="rule"></span>
          <button class="blue" type="button" aria-label="Compare"><ui-icon name="diff"></ui-icon></button>
          <span class="rule"></span>
          <button class="blue" type="button" aria-label="Shuffle"><ui-icon name="shuffle"></ui-icon></button>
          <span class="rule"></span>
          <div class="tool-pair">
            <button class="blue" type="button" aria-label="Expand all"><ui-icon name="expand"></ui-icon></button>
            <button class="muted" type="button" aria-label="Collapse all"><ui-icon name="contract"></ui-icon></button>
          </div>
        </div>
      </div>
      <ol class="hops">
        ${HOPS.map(
          (h) => html`<li class="hop hop-${h.kind}">
            <button class="hop-toggle" type="button" aria-label="Expand hop"><ui-chevron></ui-chevron></button>
            ${this.marker(h.kind)}
            <p class="hop-name">${h.name} <span class="hop-kind">(${h.kind})</span></p>
          </li>`,
        )}
      </ol>
      <div class="return">
        <button class="return-toggle" type="button"><ui-chevron></ui-chevron>Return path</button>
      </div>
    </section>`;
  }

  private renderMap() {
    return html`<section class="panel map-panel">
      <world-map></world-map>
      <aside class="side">
        <div class="side-section">
          <h3 class="side-title">Link visibility</h3>
          <label class="switch show-links"><input class="switch-input" type="checkbox" role="switch" checked />Show links</label>
        </div>
        <div class="side-section">
          <h3 class="side-title">Link type</h3>
          <div class="types">
            ${LINK_TYPES.map(
              (t) => html`<label class="type"
                ><input class="box" type="checkbox" .checked=${this.linkTypes.has(t)} @change=${() => this.toggleType(t)} />${t}</label
              >`,
            )}
          </div>
        </div>
        <button class="corner" type="button" aria-label="Collapse panel"><ui-icon name="corner"></ui-icon></button>
      </aside>
    </section>`;
  }

  render() {
    return html`${this.renderSearch()}
      <main class="columns">${this.renderFilters()}${this.renderPaths()}${this.renderMap()}</main>`;
  }
}
